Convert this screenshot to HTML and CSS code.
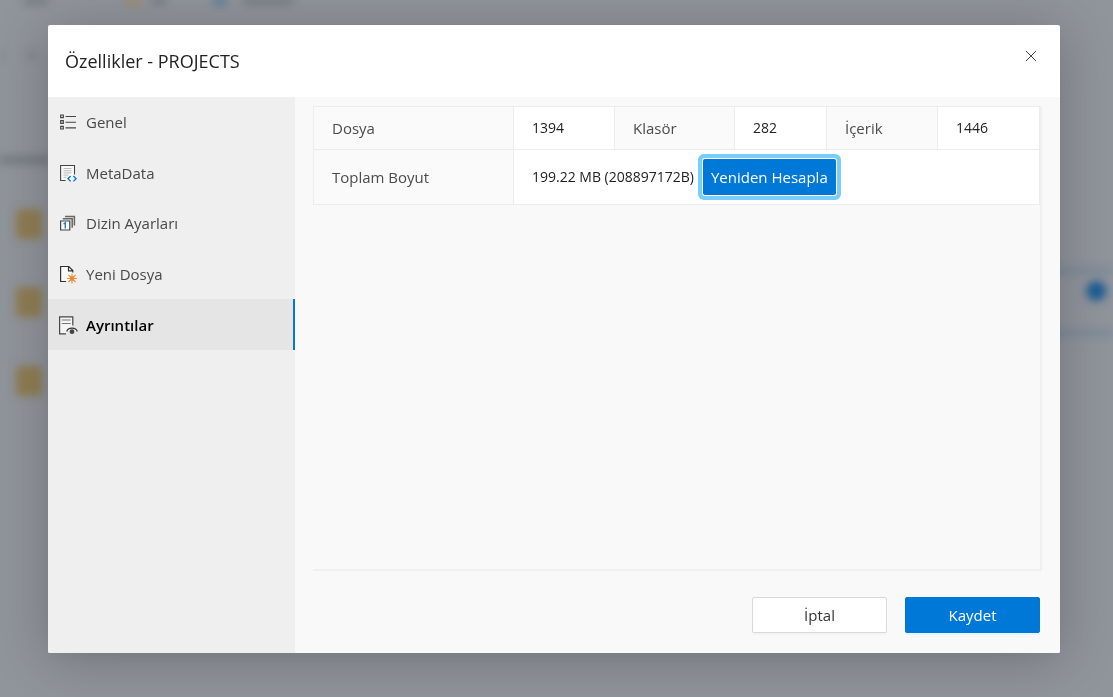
FILE: index.html
```html
<!DOCTYPE html>
<html lang="tr">
<head>
<meta charset="utf-8">
<meta name="viewport" content="width=device-width, initial-scale=1">
<title>Özellikler - PROJECTS</title>
<link rel="stylesheet" href="styles.css">
</head>
<body>
<svg class="backdrop" aria-hidden="true">
  <g fill="#5a6066">
    <rect x="24" y="-6" width="24" height="9"/>
    <rect x="152" y="-6" width="14" height="9"/>
    <rect x="243" y="-6" width="50" height="9"/>
    <rect x="0" y="156" width="50" height="8" opacity=".5"/>
    <rect x="26" y="50" width="12" height="10" opacity=".2"/>
    <rect x="-6" y="50" width="10" height="10" opacity=".2"/>
  </g>
  <rect x="124" y="-8" width="18" height="12" fill="#a8874f"/>
  <rect x="214" y="-8" width="12" height="12" fill="#2f6d99"/>
  <g fill="#8f7d52">
    <rect x="16" y="209" width="26" height="30" rx="4"/>
    <rect x="16" y="287" width="26" height="30" rx="4"/>
    <rect x="16" y="366" width="26" height="30" rx="4"/>
  </g>
  <g fill="#50789a" opacity=".5">
    <rect x="90%" y="269" width="12%" height="4"/>
    <rect x="90%" y="331" width="12%" height="4"/>
  </g>
  <circle cx="98.5%" cy="291" r="10" fill="#1b5c94"/>
</svg>

<main class="dialog" role="dialog" aria-labelledby="dialog-title">
  <header class="dialog-header">
    <h1 class="dialog-title" id="dialog-title">Özellikler - PROJECTS</h1>
    <button class="close-button" type="button" aria-label="Kapat">
      <svg width="12" height="12" viewBox="0 0 12 12" fill="none" stroke="#444" stroke-width="1"><path d="M1 1l10 10M11 1L1 11"/></svg>
    </button>
  </header>
  <div class="dialog-body">
    <nav class="sidebar">
      <ul class="nav-list">
        <li><a class="nav-link" href="#genel">
          <svg class="nav-icon" viewBox="0 0 18 18" fill="none" stroke="#444"><path d="M.7 2h2.6v2.6H.7zM.7 7.7h2.6v2.6H.7zM.7 13.4h2.6V16H.7z" stroke-width="1.2"/><path d="M5.5 3.5H16M5.5 9.2H16M5.5 14.9H16" stroke-width="1.1"/></svg>
          Genel</a></li>
        <li><a class="nav-link" href="#metadata">
          <svg class="nav-icon" viewBox="0 0 18 18" fill="none"><path d="M14.5 10V1.5H.6v15H8" fill="#fafafa"/><path d="M14.5 10.5v-9H.6v15h5" stroke="#444" stroke-width="1.1"/><path d="M3.5 4.5h8M3.5 6.7h8M3.5 8.9h8M3.5 11.1h5M3.5 13.3h3" stroke="#bbb"/><path d="M10.7 12l-2.7 2.7 2.7 2.7M13.4 12l2.7 2.7-2.7 2.7" stroke="#0078d4" stroke-width="1.3"/></svg>
          MetaData</a></li>
        <li><a class="nav-link" href="#dizin">
          <svg class="nav-icon" viewBox="0 0 18 18" fill="none"><path d="M5 2.6h9.4v9M2.8 4.8h9.4v9" stroke="#666" stroke-width="1.5"/><path d="M.6 7h9.2v9H.6z" fill="#fafafa" stroke="#444" stroke-width="1.2"/><path d="M3.5 9.8l1.8-.9v5.6" stroke="#1683d0" stroke-width="1.4"/></svg>
          Dizin Ayarları</a></li>
        <li><a class="nav-link" href="#yeni">
          <svg class="nav-icon" viewBox="0 0 18 18" fill="none"><path d="M.6 1.5h8l4.4 4.4V16.5H.6z" fill="#fafafa"/><path d="M6 16.5H.6v-15h8.2l4 4v2M8.5 1.5v4.3h4" stroke="#333" stroke-width="1.2"/><path d="M12 8.5v10M7 13.5h10M8.5 10l7 7M15.5 10l-7 7" stroke="#ef8733" stroke-width="1.1"/><circle cx="12" cy="13.5" r="2.3" fill="#ef8733"/></svg>
          Yeni Dosya</a></li>
        <li><a class="nav-link active" href="#ayrintilar" aria-current="page">
          <svg class="nav-icon" viewBox="0 0 18 18" fill="none"><path d="M12.8 9.5V.8H-.4v17H6" fill="#f4f4f4" stroke="#444" stroke-width="1.2"/><path d="M1.7 4h9M1.7 7.5h9" stroke="#777" stroke-width="1.2"/><path d="M6.7 15.5c1.2-4.6 9.4-4.6 10.6 0" fill="#f4f4f4" stroke="#333" stroke-width="1.2"/><circle cx="12" cy="15.7" r="2.4" fill="#444"/></svg>
          Ayrıntılar</a></li>
      </ul>
    </nav>
    <section class="content">
      <div class="panel">
        <table class="details">
          <colgroup>
            <col class="col-label"><col class="col-files"><col class="col-folder-label"><col class="col-folders"><col class="col-content-label"><col class="col-content">
          </colgroup>
          <tbody>
            <tr><th scope="row">Dosya</th><td>1394</td><th scope="row">Klasör</th><td>282</td><th scope="row">İçerik</th><td>1446</td></tr>
            <tr class="size-row"><th scope="row">Toplam Boyut</th><td colspan="5"><div class="size-cell"><span>199.22 MB (208897172B)</span><button class="recalculate" type="button">Yeniden Hesapla</button></div></td></tr>
          </tbody>
        </table>
      </div>
      <footer class="actions">
        <button class="action" type="button">İptal</button>
        <button class="action primary" type="button">Kaydet</button>
      </footer>
    </section>
  </div>
</main>
</body>
</html>
```
FILE: styles.css
```css
* { box-sizing: border-box; }

body {
  margin: 0;
  min-height: 100vh;
  display: flex;
  padding: 25px 53px 44px 48px;
  background: #90949b;
  color: #222;
  font: 15px/20px "Open Sans", "Noto Sans", sans-serif;
  overflow: hidden;
}

button { font: inherit; cursor: pointer; }

.backdrop {
  position: fixed;
  inset: 0;
  width: 100%;
  height: 100%;
  filter: blur(4px);
}

.dialog {
  position: relative;
  flex: 1;
  display: flex;
  flex-direction: column;
  border-radius: 2px;
  overflow: hidden;
  background: #fff;
  box-shadow: 0 6px 56px rgba(0, 0, 0, 0.22), 0 5px 14px rgba(0, 0, 0, 0.03);
}

.dialog-header {
  display: flex;
  justify-content: space-between;
  align-items: center;
  height: 72px;
  padding: 0 17px;
}

.dialog-title {
  margin: 0;
  font-size: 18px;
  font-weight: 500;
}

.close-button {
  display: grid;
  place-items: center;
  width: 24px;
  height: 24px;
  margin-bottom: 10px;
  padding: 0;
  border: 0;
  background: transparent;
}

.dialog-body { flex: 1; display: flex; }

.sidebar { flex: 0 0 247px; background: #efefef; }

.nav-list {
  display: grid;
  grid-auto-rows: 1fr;
  height: 253px;
  margin: 0;
  padding: 0;
  list-style: none;
}

.nav-link {
  display: flex;
  align-items: center;
  gap: 8px;
  height: 100%;
  padding-left: 12px;
  border-right: 2px solid transparent;
  color: #484848;
  text-decoration: none;
}

.nav-link.active {
  border-color: #0078d4;
  background: #e5e5e5;
  color: #000;
  font-weight: 600;
}

.nav-icon { width: 18px; height: 18px; overflow: visible; }

.content {
  flex: 1;
  min-width: 0;
  display: flex;
  flex-direction: column;
  padding: 9px 18px 20px;
  background: #f9f9f9;
}

.panel {
  flex: 1;
  border-right: 2px solid #f0f0f0;
  border-bottom: 2px solid #f0f0f0;
}

.details {
  width: 100%;
  table-layout: fixed;
  border-collapse: collapse;
  background: #fff;
}

.col-label { width: 200px; }
.col-files { width: 101px; }
.col-folder-label { width: 120px; }
.col-folders { width: 92px; }
.col-content-label { width: 111px; }

.details th,
.details td {
  height: 43px;
  padding: 0 0 0 18px;
  border: 1px solid #ececec;
  text-align: left;
  font-weight: 400;
}

.details th { background: #fafafa; color: #4c4c4c; }
.details td { font-size: 14px; }
.details .size-row > * { height: 55px; }

.size-cell { display: flex; align-items: center; gap: 9px; }

.recalculate {
  height: 36px;
  padding: 0 8px;
  border: 0;
  border-radius: 2px;
  background: #0078d7;
  color: #fff;
  font-size: 15px;
  box-shadow: 0 0 0 1px #fff, 0 0 0 5px #79cdf8;
}

.actions {
  display: flex;
  justify-content: flex-end;
  gap: 18px;
  padding: 26px 2px 0 0;
}

.action {
  width: 135px;
  height: 36px;
  border: 1px solid #d9d9d9;
  border-radius: 2px;
  background: #fff;
  color: #333;
  box-shadow: 0 2px 0 rgba(0, 0, 0, 0.02);
}

.action.primary {
  border-color: #0078d7;
  background: #0078d7;
  color: #fff;
  box-shadow: 0 2px 0 #e6f4fb;
}
```
